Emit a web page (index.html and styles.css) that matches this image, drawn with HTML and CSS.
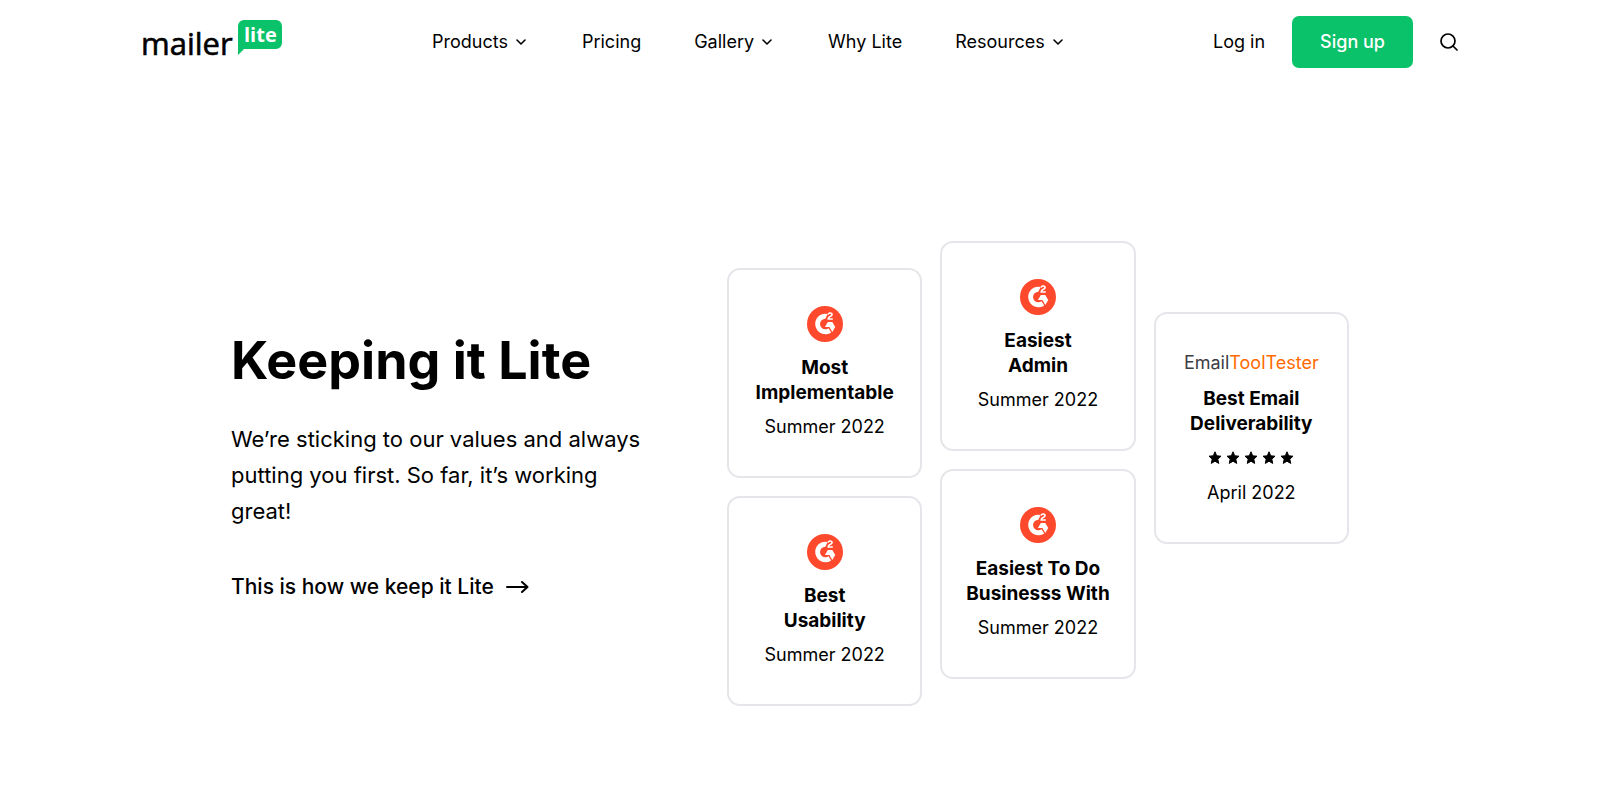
FILE: index.html
```html
<!DOCTYPE html>
<html lang="en">
<head>
<meta charset="utf-8">
<meta name="viewport" content="width=device-width, initial-scale=1">
<title>MailerLite</title>
<link rel="stylesheet" href="styles.css">
</head>
<body>
<svg class="sprite" aria-hidden="true">
  <symbol id="chevron" viewBox="0 0 16 6"><path d="M4 1l4 4 4-4" fill="none" stroke="currentColor" stroke-width="1.600" stroke-linecap="round" stroke-linejoin="round"/></symbol>
  <symbol id="star" viewBox="0 0 14 14"><path d="M7 .8l1.700 4 4.300.4-3.200 2.900.9 4.300L7 10.200l-3.700 2.200.9-4.300L1 5.200l4.300-.4z" fill="currentColor" stroke="currentColor" stroke-width="1" stroke-linejoin="round"/></symbol>
  <symbol id="g2" viewBox="0 0 1000 1000">
    <circle cx="500" cy="500" r="500" fill="#ff492c"/>
    <g fill="#fff">
      <path d="M716.4 383.8h-148.500v-6.800c0-25 4.800-45.700 14.700-62.200 9.900-16.500 27.200-31 52.200-43.700l11.500-5.600c20.300-10.300 25.600-19 25.600-29.600 0-12.600-10.800-21.700-28.400-21.700-20.800 0-36.600 10.800-47.600 32.900l-28.200-28.300c6.300-13.500 16.400-24.300 29.900-32.700 13.400-8.600 29-13.100 44.900-12.900 20.300 0 37.900 5.400 52.600 16.300s22.200 26 22.200 45.100c0 30.400-17.100 49.100-49.200 65.500l-17.900 9.100c-19.200 9.700-28.700 18.300-31.300 33.600h97.500z"/>
      <path d="M703 445H578l-80 138h125l80 139 81-139z"/>
      <path d="M509 647a147 147 0 0 1 0-294l64-133.500A285 285 0 1 0 672 734l-74-117c-26 20-56 30-89 30z"/>
    </g>
  </symbol>
</svg>

<header class="header">
  <a class="logo" href="#" aria-label="MailerLite">
    <svg width="142" height="40" viewBox="0 0 142 40">
      <text class="logo-mailer" x="-1" y="37">mailer</text>
      <path d="M102 2h32a6 6 0 0 1 6 6v17a6 6 0 0 1-6 6h-32l-6 6V8a6 6 0 0 1 6-6z" fill="#09c269"/>
      <text class="logo-lite" x="102" y="24">lite</text>
    </svg>
  </a>
  <nav class="nav" aria-label="Main">
    <button class="nav-item" type="button">Products <svg class="chevron"><use href="#chevron"/></svg></button>
    <a class="nav-item" href="#">Pricing</a>
    <button class="nav-item" type="button">Gallery <svg class="chevron"><use href="#chevron"/></svg></button>
    <a class="nav-item" href="#">Why Lite</a>
    <button class="nav-item" type="button">Resources <svg class="chevron"><use href="#chevron"/></svg></button>
  </nav>
  <div class="actions">
    <a class="nav-item" href="#">Log in</a>
    <a class="signup" href="#">Sign up</a>
    <button class="search" type="button" aria-label="Search">
      <svg width="18" height="18" viewBox="0 0 18 18" fill="none" stroke="currentColor" stroke-width="1.700" stroke-linecap="round"><circle cx="8" cy="8" r="7"/><path d="M13 13l4 4"/></svg>
    </button>
  </div>
</header>

<main class="hero">
  <section class="intro">
    <h1 class="title">Keeping it Lite</h1>
    <p class="lead">We’re sticking to our values and always putting you first. So far, it’s working great!</p>
    <a class="more" href="#">This is how we keep it Lite
      <svg width="23" height="14" viewBox="0 0 23 14" fill="none" stroke="currentColor" stroke-width="2" stroke-linecap="round" stroke-linejoin="round"><path d="M1 7h20.500M16 2l5.500 5-5.500 5"/></svg>
    </a>
  </section>
  <section class="awards" aria-label="Awards">
    <div class="column column-left">
      <article class="card"><svg class="badge"><use href="#g2"/></svg><h2 class="award">Most<br>Implementable</h2><p class="date">Summer 2022</p></article>
      <article class="card"><svg class="badge"><use href="#g2"/></svg><h2 class="award">Best<br>Usability</h2><p class="date">Summer 2022</p></article>
    </div>
    <div class="column">
      <article class="card"><svg class="badge"><use href="#g2"/></svg><h2 class="award">Easiest<br>Admin</h2><p class="date">Summer 2022</p></article>
      <article class="card"><svg class="badge"><use href="#g2"/></svg><h2 class="award">Easiest To Do<br>Businesss With</h2><p class="date">Summer 2022</p></article>
    </div>
    <div class="column column-right">
      <article class="card">
        <p class="source">Email<span class="source-accent">ToolTester</span></p>
        <h2 class="award">Best Email<br>Deliverability</h2>
        <div class="stars" role="img" aria-label="5 stars"><svg class="star"><use href="#star"/></svg><svg class="star"><use href="#star"/></svg><svg class="star"><use href="#star"/></svg><svg class="star"><use href="#star"/></svg><svg class="star"><use href="#star"/></svg></div>
        <p class="date">April 2022</p>
      </article>
    </div>
  </section>
</main>
</body>
</html>
```
FILE: styles.css
```css
* { box-sizing: border-box; }
body { margin: 0; background: #fff; color: #000; font: 18px/24px Inter, "Liberation Sans", sans-serif; }
h1, h2, p { margin: 0; }
a { color: inherit; text-decoration: none; }
button { padding: 0; border: 0; background: none; color: inherit; font: inherit; cursor: pointer; }
svg { display: block; flex: none; }
.sprite { position: absolute; width: 0; height: 0; }

.header { display: flex; align-items: center; max-width: 1316px; height: 84px; margin: 0 auto; }
.logo { margin-top: -8px; }
.logo svg { overflow: visible; }
.logo-mailer { font: 400 31px "Open Sans", "Noto Sans", sans-serif; stroke: #000; stroke-width: 0.6px; }
.logo-lite { font: 700 20px "Open Sans", "Noto Sans", sans-serif; fill: #fff; }
.nav { display: flex; align-items: center; gap: 53px; margin-left: 148px; }
.nav-item { display: flex; align-items: center; gap: 5px; white-space: nowrap; }
.chevron { width: 16px; height: 6px; }
.actions { display: flex; align-items: center; gap: 27px; margin-left: auto; }
.signup { padding: 14px 28px; border-radius: 7px; background: #09c269; color: #fff; font-weight: 500; }

.hero { display: grid; grid-template-columns: 1fr 622px; gap: 72px; align-items: center; max-width: 1316px; margin: 0 auto; padding: 157px 109px 80px 89px; }
.intro { padding-bottom: 18px; }
.title { font-size: 52px; line-height: 66px; font-weight: 700; }
.lead { margin-top: 27px; font-size: 22px; line-height: 36px; }
.more { display: flex; align-items: center; gap: 12px; margin-top: 44px; font-size: 21px; line-height: 28px; font-weight: 500; }

.awards { display: grid; grid-template-columns: repeat(3, 1fr); gap: 18px; align-items: start; }
.column { display: grid; gap: 18px; }
.column-left { margin-top: 27px; }
.column-right { margin-top: 71px; }
.card { display: flex; flex-direction: column; align-items: center; padding: 36px 0 37px; border: 2px solid #e5e6ea; border-radius: 13px; text-align: center; }
.badge { width: 36px; height: 36px; margin-bottom: 13px; }
.award { margin-bottom: 10px; font-size: 19px; line-height: 25px; font-weight: 700; }
.source { margin-bottom: 10px; line-height: 26px; color: #3c3c43; }
.source-accent { color: #ff6a00; }
.stars { display: flex; align-items: center; gap: 4px; height: 24px; margin-bottom: 11px; }
.star { width: 14px; height: 14px; }
```
